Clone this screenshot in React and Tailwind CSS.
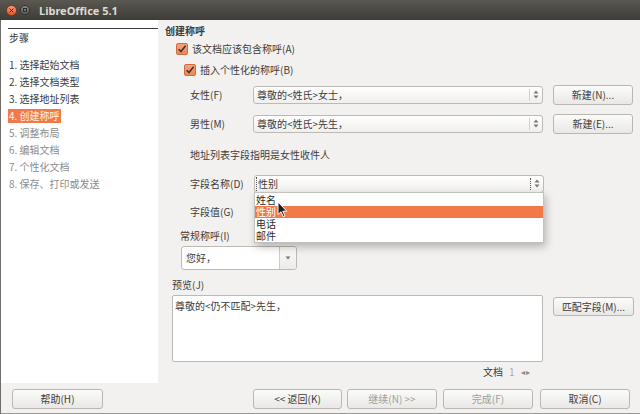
import React from 'react'

const font = "font-['Noto_Sans_CJK_SC','Noto_Sans',sans-serif]"

const Check = () => (
  <svg width="12" height="12" viewBox="0 0 12 12" className="shrink-0">
    <defs>
      <linearGradient id="cbg" x1="0" y1="0" x2="0" y2="1">
        <stop offset="0" stopColor="#f6a57f" />
        <stop offset="1" stopColor="#ee8656" />
      </linearGradient>
    </defs>
    <rect x="0.5" y="0.5" width="11" height="11" rx="1.5" fill="url(#cbg)" stroke="#cf6a3c" />
    <path d="M2.6 6.2 L5 8.6 L9.6 2.8" fill="none" stroke="#3a3632" strokeWidth="1.6" />
  </svg>
)

const Spin = () => (
  <svg width="6" height="9" viewBox="0 0 6 9">
    <path d="M3 0.5 L5.5 3.5 H0.5 Z" fill="#7a7774" />
    <path d="M3 8.5 L5.5 5.5 H0.5 Z" fill="#7a7774" />
  </svg>
)

const Select = ({ value, focus, className = '' }) => (
  <div className={`relative flex items-center h-full rounded-[3px] border border-[#bdbab5] bg-gradient-to-b from-white to-[#f0efed] ${className}`}>
    {focus && <div className="absolute left-[1px] top-[1px] bottom-[1px] w-0 border-l border-dotted border-[#555]" />}
    <span className="flex-1 pl-[3px] text-[10px] text-[#3c3c3c] leading-[14px] whitespace-nowrap">{value}</span>
    <div className={`w-[13px] h-[80%] flex items-center justify-center border-l ${focus ? 'border-dotted border-[#555]' : 'border-[#d3d0cc]'}`}>
      <Spin />
    </div>
  </div>
)

const Btn = ({ children, disabled, className = '' }) => (
  <div className={`flex items-center justify-center rounded-[3px] border border-[#bab7b2] bg-gradient-to-b from-[#fbfbfa] to-[#e9e8e6] text-[10px] leading-none ${disabled ? 'text-[#a09e9b]' : 'text-[#3c3c3c]'} ${className}`}>
    {children}
  </div>
)

const steps = [
  { t: '1. 选择起始文档', s: 'done' },
  { t: '2. 选择文档类型', s: 'done' },
  { t: '3. 选择地址列表', s: 'done' },
  { t: '4. 创建称呼', s: 'cur' },
  { t: '5. 调整布局', s: 'todo' },
  { t: '6. 编辑文档', s: 'todo' },
  { t: '7. 个性化文档', s: 'todo' },
  { t: '8. 保存、打印或发送', s: 'todo' },
]

export default function App() {
  return (
    <div className={`w-[640px] h-[414px] flex flex-col bg-[#f2f1f0] overflow-hidden ${font}`}>
      {/* title bar */}
      <div className="h-[20px] flex items-center bg-gradient-to-b from-[#5b5852] to-[#3d3c38] shrink-0">
        <div className="ml-[6px] w-[11px] h-[11px] rounded-full bg-gradient-to-b from-[#f59a74] to-[#e5582a] border border-[#7a3a1f] flex items-center justify-center">
          <svg width="5" height="5" viewBox="0 0 5 5"><path d="M0.5 0.5 L4.5 4.5 M4.5 0.5 L0.5 4.5" stroke="#5a2310" strokeWidth="1" /></svg>
        </div>
        <div className="ml-[3px] w-[10px] h-[10px] rounded-full bg-gradient-to-b from-[#8e8b85] to-[#5f5d58] border border-[#33322f] flex items-center justify-center">
          <div className="w-[4px] h-[4px] border border-[#2e2d2a]" />
        </div>
        <span className="ml-[9px] text-[11px] font-bold text-[#dfdbd2] leading-none font-['Noto_Sans',sans-serif]">LibreOffice 5.1</span>
      </div>

      <div className="flex-1 flex flex-col border-l border-[#6f6d68]">
        <div className="flex flex-1">
          {/* steps */}
          <div className="w-[157px] bg-white flex flex-col">
            <div className="mt-[8px] ml-[7px] border-t border-[#3c3c3c]" />
            <div className="h-[16px] pl-[8px] flex items-center text-[10px] text-[#3c3c3c]">步骤</div>
            <div className="mt-[11px] flex flex-col">
              {steps.map(st => (
                <div key={st.t} className="h-[17px] pl-[7px] flex items-center text-[10px] leading-none">
                  <span className={`inline-flex items-center h-[14px] px-[1px] ${st.s === 'cur' ? 'bg-[#f27a48] text-[#fff3ec]' : st.s === 'done' ? 'text-[#3c3c3c]' : 'text-[#8d8b88]'}`}>{st.t}</span>
                </div>
              ))}
            </div>
          </div>

          {/* content */}
          <div className="flex-1 flex flex-col text-[10px] text-[#3c3c3c] leading-none">
            <div className="mt-[3px] h-[16px] pl-[7px] flex items-center font-bold">创建称呼</div>
            <div className="mt-[2px] h-[16px] pl-[18px] flex items-center gap-[4px]"><Check />该文档应该包含称呼(A)</div>
            <div className="mt-[5px] h-[16px] pl-[26px] flex items-center gap-[4px]"><Check />插入个性化的称呼(B)</div>

            <div className="mt-[7px] h-[20px] pl-[32px] flex items-center">
              <span className="w-[63px]">女性(F)</span>
              <div className="w-[290px] h-[18px]"><Select value="尊敬的<姓氏>女士，" /></div>
              <Btn className="ml-[10px] w-[80px] h-[20px]">新建(N)...</Btn>
            </div>
            <div className="mt-[9px] h-[20px] pl-[32px] flex items-center">
              <span className="w-[63px]">男性(M)</span>
              <div className="w-[290px] h-[18px]"><Select value="尊敬的<姓氏>先生，" /></div>
              <Btn className="ml-[10px] w-[80px] h-[20px]">新建(E)...</Btn>
            </div>

            <div className="mt-[13px] h-[16px] pl-[32px] flex items-center">地址列表字段指明是女性收件人</div>

            <div className="relative z-10 mt-[12px] h-[18px] pl-[32px] flex items-center">
              <span className="w-[64px]">字段名称(D)</span>
              <div className="relative w-[290px] h-[18px]">
                <Select value="性别" focus />
                <div className="absolute left-0 top-[17px] w-[290px] h-[51px] bg-white border border-[#c4c1bd] shadow-[2px_4px_8px_rgba(0,0,0,0.25)] flex flex-col pt-[1px]">
                  {['姓名', '性别', '电话', '邮件'].map(x => (
                    <div key={x} className={`h-[12.5px] pl-[1px] flex items-center text-[10px] leading-[12px] ${x === '性别' ? 'bg-[#f27a48] text-white' : 'text-[#2c2c2c]'}`}>{x}</div>
                  ))}
                </div>
                <svg className="absolute left-[23px] top-[26px]" width="11" height="17" viewBox="0 0 11 17">
                  <path d="M1 1 L1 13.5 L4 10.8 L6.2 15.6 L8 14.8 L5.8 10.2 L9.8 10.2 Z" fill="#1e1e1e" stroke="#fff" strokeWidth="1" strokeLinejoin="round" />
                </svg>
              </div>
            </div>

            <div className="mt-[11px] h-[16px] pl-[32px] flex items-center">字段值(G)</div>
            <div className="mt-[8px] h-[16px] pl-[22px] flex items-center">常规称呼(I)</div>
            <div className="mt-[2px] h-[24px] pl-[23px] flex">
              <div className="w-[116px] h-full flex items-center rounded-[3px] border border-[#bdbab5] bg-white">
                <span className="flex-1 pl-[4px] text-[10px]">您好，</span>
                <div className="w-[17px] h-full flex items-center justify-center border-l border-[#cfccc8] bg-gradient-to-b from-[#fbfbfa] to-[#ecebe9] rounded-r-[3px]">
                  <svg width="6" height="4" viewBox="0 0 6 4"><path d="M0.5 0.5 H5.5 L3 3.5 Z" fill="#7a7774" /></svg>
                </div>
              </div>
            </div>

            <div className="mt-[7px] h-[16px] pl-[14px] flex items-center">预览(J)</div>
            <div className="mt-[2px] h-[67px] pl-[14px] flex items-start">
              <div className="w-[371px] h-full bg-white border border-[#bdbab5] rounded-[2px] pl-[2px] pt-[5px] text-[10px]">尊敬的&lt;仍不匹配&gt;先生，</div>
              <Btn className="ml-[10px] mt-[2px] w-[81px] h-[19px]">匹配字段(M)...</Btn>
            </div>
            <div className="mt-[2px] h-[16px] pl-[325px] flex items-center gap-[6px] text-[#3c3c3c]">
              <span>文档</span><span className="text-[#aaa]">1</span><span className="text-[8px] text-[#888]">◂ ▸</span>
            </div>
          </div>
        </div>

        {/* bottom buttons */}
        <div className="h-[31px] shrink-0 flex items-start pt-[6px] border-b border-[#9a9792]">
          <Btn className="ml-[11px] w-[91px] h-[20px]">帮助(H)</Btn>
          <Btn className="ml-[150px] w-[89px] h-[20px]">&lt;&lt; 返回(K)</Btn>
          <Btn disabled className="ml-[5px] w-[90px] h-[20px]">继续(N) &gt;&gt;</Btn>
          <Btn disabled className="ml-[6px] w-[90px] h-[20px]">完成(F)</Btn>
          <Btn className="ml-[7px] w-[90px] h-[20px]">取消(C)</Btn>
        </div>
      </div>
    </div>
  )
}
